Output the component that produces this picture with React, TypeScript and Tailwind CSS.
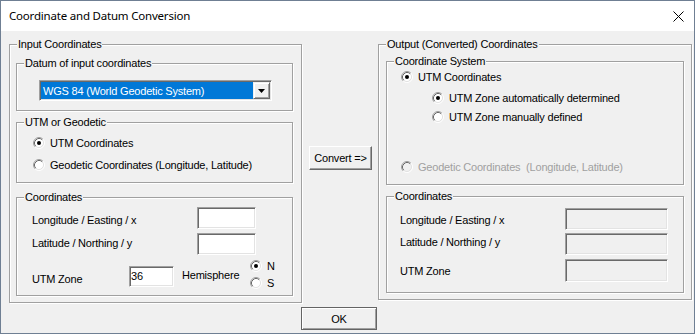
import React from "react";

function Radio({ checked = false, disabled = false }: { checked?: boolean; disabled?: boolean }) {
  return (
    <svg width="12" height="12" viewBox="0 0 12 12" className="shrink-0">
      <circle cx="6" cy="6" r="4.5" fill={disabled ? "#f0f0f0" : "#ffffff"} />
      <path d="M2.11 9.89 A5.5 5.5 0 0 1 9.89 2.11" stroke="#a0a0a0" strokeWidth="1" fill="none" />
      <path d="M9.89 2.11 A5.5 5.5 0 0 1 2.11 9.89" stroke="#ffffff" strokeWidth="1" fill="none" />
      <path d="M2.82 9.18 A4.5 4.5 0 0 1 9.18 2.82" stroke="#696969" strokeWidth="1" fill="none" />
      <path d="M9.18 2.82 A4.5 4.5 0 0 1 2.82 9.18" stroke="#e3e3e3" strokeWidth="1" fill="none" />
      {checked && <circle cx="6" cy="6" r="2" fill={disabled ? "#a0a0a0" : "#000000"} />}
    </svg>
  );
}

function RadioRow({
  label,
  checked = false,
  disabled = false,
  className = "",
}: {
  label: string;
  checked?: boolean;
  disabled?: boolean;
  className?: string;
}) {
  return (
    <div className={`flex h-[14px] items-center gap-[5px] ${className}`}>
      <Radio checked={checked} disabled={disabled} />
      <span className={`whitespace-pre leading-[14px] ${disabled ? "text-[#a0a0a0]" : "text-black"}`}>{label}</span>
    </div>
  );
}

function Group({
  label,
  className = "",
  children,
}: {
  label: string;
  className?: string;
  children?: React.ReactNode;
}) {
  return (
    <div
      className={`relative border border-[#a0a0a0] shadow-[inset_1px_1px_0_#ffffff,1px_1px_0_#ffffff] ${className}`}
    >
      <span className="absolute left-[7px] top-[-8px] whitespace-nowrap bg-[#f0f0f0] px-[1px] leading-[14px] text-black">
        {label}
      </span>
      {children}
    </div>
  );
}

function Field({
  value = "",
  disabled = false,
  className = "",
}: {
  value?: string;
  disabled?: boolean;
  className?: string;
}) {
  return (
    <div
      className={`flex items-start border border-t-[#a0a0a0] border-l-[#a0a0a0] border-r-white border-b-white shadow-[inset_1px_1px_0_#696969,inset_-1px_-1px_0_#e3e3e3] ${
        disabled ? "bg-[#f0f0f0]" : "bg-white"
      } ${className}`}
    >
      <span className="pl-[1px] pt-[2px] leading-[14px]">{value}</span>
    </div>
  );
}

export default function App() {
  return (
    <div className="h-[334px] w-[695px] overflow-hidden bg-[#f0f0f0] font-['Liberation_Sans',Arial,sans-serif] text-[11px] tracking-[-0.2px] text-black">
      <div className="flex h-[334px] w-[695px] flex-col border border-[#6f7f93]">
        {/* Title bar */}
        <div className="flex h-[30px] shrink-0 items-center justify-between bg-white pl-[8px] pr-[10px]">
          <span className="font-['Noto_Sans',sans-serif] text-[11.5px] leading-[16px] tracking-[-0.2px] text-black">
            Coordinate and Datum Conversion
          </span>
          <svg width="11" height="11" viewBox="0 0 11 11">
            <path d="M0.5 0.5 L10.5 10.5 M10.5 0.5 L0.5 10.5" stroke="#000" strokeWidth="1" />
          </svg>
        </div>

        {/* Body */}
        <div className="flex flex-col">
          <div className="mt-[13px] flex items-start pl-[8px]">
            {/* Input Coordinates */}
            <Group label="Input Coordinates" className="h-[259px] w-[293px] shrink-0 pl-[6px] pt-[18px]">
              <div className="flex flex-col">
                <Group label="Datum of input coordinates" className="h-[48px] w-[277px] pl-[22px] pt-[16px]">
                  <div className="flex h-[21px] w-[233px] border border-t-[#a0a0a0] border-l-[#a0a0a0] border-r-white border-b-white p-[1px] shadow-[inset_1px_1px_0_#696969,inset_-1px_-1px_0_#e3e3e3] bg-white">
                    <div className="flex h-[17px] w-[212px] items-center bg-[#0078d7] pl-[2px] text-white leading-[14px]">
                      WGS 84 (World Geodetic System)
                    </div>
                    <div className="flex h-[17px] w-[17px] items-center justify-center border border-t-[#f0f0f0] border-l-[#f0f0f0] border-r-[#696969] border-b-[#696969] bg-[#f0f0f0] shadow-[inset_1px_1px_0_#ffffff,inset_-1px_-1px_0_#a0a0a0]">
                      <svg width="7" height="4" viewBox="0 0 7 4">
                        <polygon points="0,0 7,0 3.5,4" fill="#000" />
                      </svg>
                    </div>
                  </div>
                </Group>

                <Group label="UTM or Geodetic" className="mt-[11px] h-[61px] w-[277px] pl-[16px] pt-[13px]">
                  <div className="flex flex-col gap-[8px]">
                    <RadioRow label="UTM Coordinates" checked />
                    <RadioRow label="Geodetic Coordinates (Longitude, Latitude)" />
                  </div>
                </Group>

                <Group label="Coordinates" className="mt-[14px] h-[99px] w-[277px] pl-[15px] pt-[9px]">
                  <div className="flex flex-col">
                    <div className="flex items-start">
                      <span className="mt-[6px] w-[165px] leading-[14px]">Longitude / Easting / x</span>
                      <Field className="h-[22px] w-[59px]" />
                    </div>
                    <div className="mt-[4px] flex items-start">
                      <span className="mt-[3px] w-[165px] leading-[14px]">Latitude / Northing / y</span>
                      <Field className="h-[22px] w-[59px]" />
                    </div>
                    <div className="mt-[4px] flex items-start">
                      <span className="mt-[13px] w-[97px] leading-[14px]">UTM Zone</span>
                      <Field value="36" className="mt-[7px] h-[21px] w-[45px]" />
                      <span className="ml-[8px] mt-[9px] w-[68px] leading-[14px]">Hemisphere</span>
                      <div className="flex flex-col gap-[3px]">
                        <RadioRow label="N" checked />
                        <RadioRow label="S" />
                      </div>
                    </div>
                  </div>
                </Group>
              </div>
            </Group>

            {/* Convert button */}
            <button className="ml-[7px] mt-[102px] flex h-[24px] w-[63px] shrink-0 items-center justify-center border border-t-white border-l-white border-r-[#696969] border-b-[#696969] bg-[#f0f0f0] leading-[14px] shadow-[inset_-1px_-1px_0_#a0a0a0]">
              Convert =&gt;
            </button>

            {/* Output Coordinates */}
            <Group
              label="Output (Converted) Coordinates"
              className="ml-[6px] h-[256px] w-[314px] shrink-0 pl-[7px] pt-[16px]"
            >
              <div className="flex flex-col">
                <Group label="Coordinate System" className="h-[124px] w-[298px] pl-[14px] pt-[8px]">
                  <div className="flex flex-col">
                    <RadioRow label="UTM Coordinates" checked />
                    <RadioRow label="UTM Zone automatically determined" checked className="ml-[31px] mt-[7px]" />
                    <RadioRow label="UTM Zone manually defined" className="ml-[31px] mt-[5px]" />
                    <RadioRow
                      label="Geodetic Coordinates  (Longitude, Latitude)"
                      disabled
                      className="mt-[36px]"
                    />
                  </div>
                </Group>

                <Group label="Coordinates" className="mt-[11px] h-[97px] w-[298px] pl-[13px] pt-[11px]">
                  <div className="flex flex-col">
                    <div className="flex items-start">
                      <span className="mt-[5px] w-[165px] leading-[14px]">Longitude / Easting / x</span>
                      <Field disabled className="h-[22px] w-[103px]" />
                    </div>
                    <div className="mt-[3px] flex items-start">
                      <span className="mt-[2px] w-[165px] leading-[14px]">Latitude / Northing / y</span>
                      <Field disabled className="h-[22px] w-[103px]" />
                    </div>
                    <div className="mt-[4px] flex items-start">
                      <span className="mt-[5px] w-[165px] leading-[14px]">UTM Zone</span>
                      <Field disabled className="h-[23px] w-[103px]" />
                    </div>
                  </div>
                </Group>
              </div>
            </Group>
          </div>

          {/* OK button */}
          <div className="mt-[4px] pl-[300px]">
            <button className="flex h-[23px] w-[76px] items-center justify-center border border-[#646464] bg-[#f0f0f0] leading-[14px] shadow-[inset_1px_1px_0_#ffffff,inset_-1px_-1px_0_#a0a0a0]">
              OK
            </button>
          </div>
        </div>
      </div>
    </div>
  );
}
